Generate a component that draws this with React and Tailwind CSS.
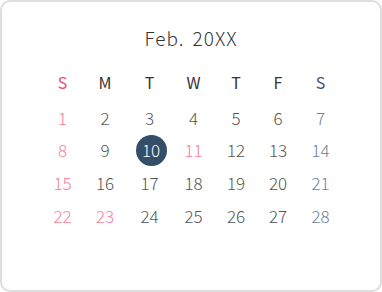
import React from 'react';

const WEEK = ['S', 'M', 'T', 'W', 'T', 'F', 'S'];
const HOLIDAYS = [11, 23];
const TODAY = 10;

const dayColor = (d, col) => {
  if (col === 0 || HOLIDAYS.includes(d)) return 'text-[#f7809b]';
  if (col === 6) return 'text-[#6f7f98]';
  return 'text-[#555]';
};

const App = () => {
  const weeks = [0, 1, 2, 3].map(w => [0, 1, 2, 3, 4, 5, 6].map(c => w * 7 + c + 1));

  return (
    <div className="w-[382px] h-[292px] bg-white" style={{ fontFamily: '"Noto Sans CJK JP", "Noto Sans", sans-serif' }}>
      <div className="w-full h-full border-2 border-[#dedede] rounded-[10px] flex flex-col items-center pt-[23px]">
        <h2 className="text-[19px] leading-[26px] font-light text-[#333] tracking-[1px]">
          Feb.<span className="ml-[8px]">20XX</span>
        </h2>

        <div className="mt-[18px] grid grid-cols-[41px_44px_45px_43px_42px_42px_43px] ml-[2px]">
          {WEEK.map((w, i) => (
            <div
              key={i}
              className={`h-[26px] flex items-center justify-center text-[16px] font-normal ${
                i === 0 ? 'text-[#ef4b73]' : i === 6 ? 'text-[#3a5274]' : 'text-[#333]'
              }`}
            >
              {w}
            </div>
          ))}
        </div>

        <div className="mt-[6px] grid grid-cols-[41px_44px_45px_43px_42px_42px_43px] auto-rows-[32.7px] ml-[2px]">
          {weeks.map(row =>
            row.map((d, c) => (
              <div key={d} className="flex items-center justify-center">
                {d === TODAY ? (
                  <span className="ml-[3px] w-[31px] h-[31px] rounded-full bg-[#344d69] text-white text-[17px] font-light flex items-center justify-center">
                    {d}
                  </span>
                ) : (
                  <span className={`text-[17px] font-light ${dayColor(d, c)}`}>{d}</span>
                )}
              </div>
            ))
          )}
        </div>
      </div>
    </div>
  );
};

export default App;
